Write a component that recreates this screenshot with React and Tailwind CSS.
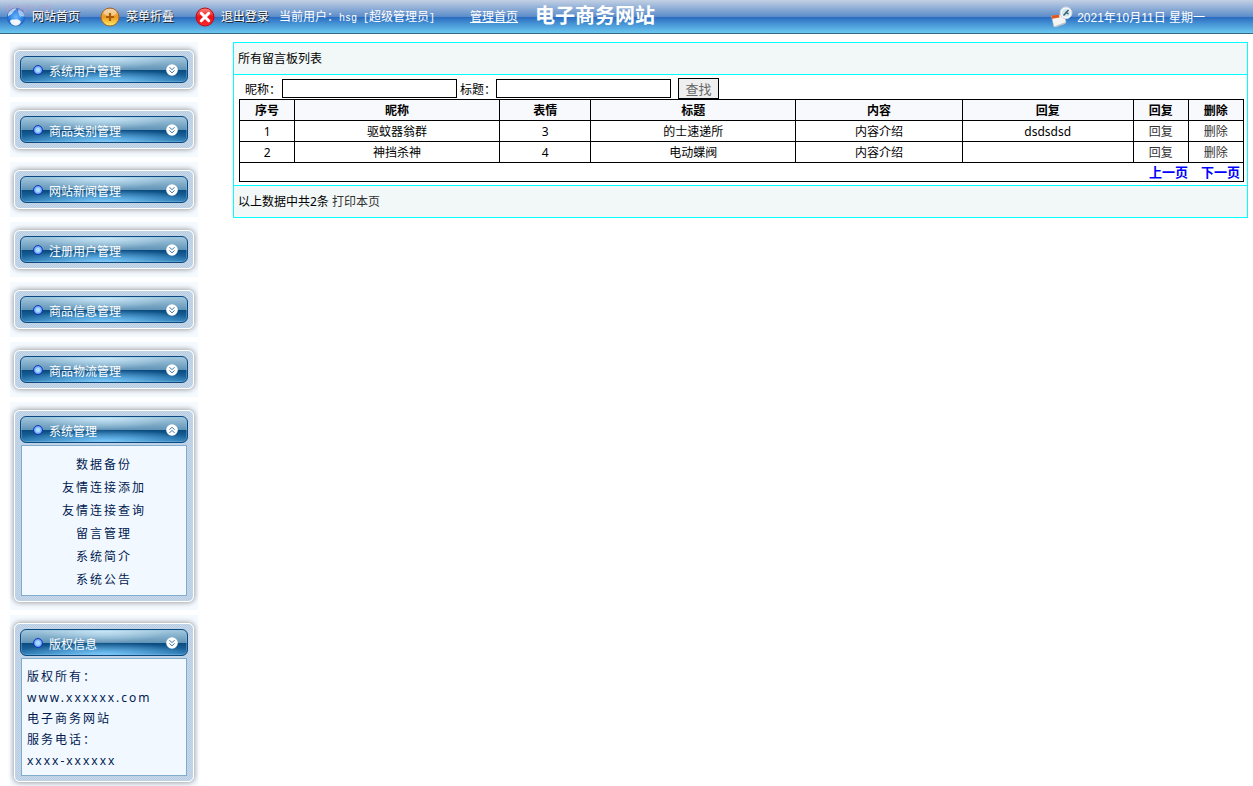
import { useState } from 'react';

const menus = [
  { title: '系统用户管理' },
  { title: '商品类别管理' },
  { title: '网站新闻管理' },
  { title: '注册用户管理' },
  { title: '商品信息管理' },
  { title: '商品物流管理' },
  {
    title: '系统管理',
    items: ['数据备份', '友情连接添加', '友情连接查询', '留言管理', '系统简介', '系统公告'],
  },
];

const messages = [
  { id: 1, name: '驱蚊器翁群', face: 3, title: '的士速递所', content: '内容介绍', reply: 'dsdsdsd' },
  { id: 2, name: '神挡杀神', face: 4, title: '电动蝶阀', content: '内容介绍', reply: '' },
];

const columns = [
  { label: '序号', width: 'w-[5.5%]' },
  { label: '昵称', width: 'w-[20.4%]' },
  { label: '表情', width: 'w-[9.1%]' },
  { label: '标题', width: 'w-[20.4%]' },
  { label: '内容', width: 'w-[16.6%]' },
  { label: '回复', width: 'w-[17%]' },
  { label: '回复', width: 'w-[5.5%]' },
  { label: '删除', width: 'w-[5.5%]' },
];

function GlobeIcon() {
  return (
    <svg viewBox="0 0 20 20" className="h-5 w-5" aria-hidden="true">
      <defs>
        <radialGradient id="globe" cx="50%" cy="50%" r="55%">
          <stop offset="0" stopColor="#6db8fb" />
          <stop offset="0.6" stopColor="#2f86e6" />
          <stop offset="1" stopColor="#1c55b4" />
        </radialGradient>
      </defs>
      <circle cx="10" cy="10" r="9.200" fill="url(#globe)" />
      <path d="M2 7C3.500 3 7 1.200 10.500 1.300C9.500 3.500 7 4 6.500 6C6 8 3.500 7.500 2 9.500Z" fill="#dcecfb" opacity="0.8" />
      <path d="M12.500 2C16 3 18.500 6 18.800 9.500C17 10 15.500 8.500 14.500 10C13 7.500 11.500 5.500 12.500 2Z" fill="#c4e0fa" opacity="0.75" />
      <path d="M4 14C6 11.500 8 13 9 12.500C11 11.500 14 13 15 15C13.500 17.800 12 18.700 9.500 18.800C6.500 18.500 4.500 16.500 4 14Z" fill="#fff" opacity="0.92" />
    </svg>
  );
}

function PlusIcon() {
  return (
    <svg viewBox="0 0 20 20" className="h-5 w-5" aria-hidden="true">
      <defs>
        <linearGradient id="amber" x1="0" y1="0" x2="0" y2="1">
          <stop offset="0" stopColor="#e9bd80" />
          <stop offset="0.5" stopColor="#ee9a1c" />
          <stop offset="1" stopColor="#ffee6a" />
        </linearGradient>
      </defs>
      <circle cx="10" cy="10" r="9" fill="url(#amber)" stroke="#a8632a" />
      <ellipse cx="10" cy="5.500" rx="6.500" ry="3.600" fill="#fff" opacity="0.4" />
      <path d="M10 6V14M6 10H14" stroke="#a85c0c" strokeWidth="2.200" />
    </svg>
  );
}

function CloseIcon() {
  return (
    <svg viewBox="0 0 20 20" className="h-5 w-5" aria-hidden="true">
      <defs>
        <linearGradient id="ruby" x1="0" y1="0" x2="0" y2="1">
          <stop offset="0" stopColor="#ff8a80" />
          <stop offset="0.5" stopColor="#e8101a" />
          <stop offset="1" stopColor="#ff2a2a" />
        </linearGradient>
      </defs>
      <circle cx="10" cy="10" r="9" fill="url(#ruby)" stroke="#c00810" />
      <path d="M6.300 6.300L13.700 13.700M13.700 6.300L6.300 13.700" stroke="#fff" strokeWidth="3" strokeLinecap="round" />
    </svg>
  );
}

function ClockIcon() {
  return (
    <svg viewBox="0 0 22 22" className="h-[22px] w-[22px]" aria-hidden="true">
      <path d="M0.500 10L13 8.500L15 16.500L3 21Z" fill="#f4f4f2" stroke="#c9ccd2" strokeWidth="0.500" />
      <path d="M0.500 9.500L8 8.800L8.500 11.500L1 12.800Z" fill="#e2571e" />
      <path d="M3 20.500L15 16L14 18L5 21.300Z" fill="#bfc6cf" />
      <circle cx="15" cy="6.800" r="5.900" fill="#f7fbfd" stroke="#cfd6dc" />
      <circle cx="15" cy="6.800" r="4" fill="#cfe8ee" />
      <path d="M12.500 9.500L17.500 4M14.500 6L17.500 8" stroke="#34566b" strokeWidth="1.300" />
    </svg>
  );
}

function Chevrons({ up }) {
  return (
    <svg viewBox="0 0 12 12" className="h-3 w-3" aria-hidden="true">
      <circle cx="6" cy="6" r="5.800" fill="#fff" />
      <path
        d={up ? 'M3.500 5.700L6 3.200L8.500 5.700M3.500 8.900L6 6.400L8.500 8.900' : 'M3.500 3.200L6 5.700L8.500 3.200M3.500 6.400L6 8.900L8.500 6.400'}
        fill="none"
        stroke="#3b6f9c"
      />
    </svg>
  );
}

function Panel({ title, up, onToggle, children }) {
  return (
    <section className="bg-[#f5faff] px-1 pt-2 pb-2">
      <div className="rounded-md border border-white bg-[repeating-conic-gradient(#b8cde2_0_25%,#c6d8e9_0_50%)] bg-[length:2px_2px] p-[5px] shadow-[0_0_5px_1px_#a0a4a8]">
        <button
          type="button"
          onClick={onToggle}
          className="flex h-[27px] w-full items-center rounded-md border border-[#0b4a80] bg-[radial-gradient(ellipse_40%_50%_at_50%_0%,#d5f1ffcc,transparent),radial-gradient(ellipse_55%_50%_at_50%_100%,#7cccff,transparent),linear-gradient(#a3c8de,#6496b8_50%,#0b4c80_54%,#2a7ab4)] pr-[9px] pl-3 text-xs leading-4 text-white shadow-[inset_0_0_0_1px_#8fc0dd66]"
        >
          <span className="h-[10px] w-[10px] rounded-full border border-[#1238c0] bg-[radial-gradient(#a5dcff_30%,#2f5cec)]" />
          <span className="ml-1.5 pt-1">{title}</span>
          <span className="ml-auto">
            <Chevrons up={up} />
          </span>
        </button>
        {children}
      </div>
    </section>
  );
}

function Sidebar() {
  const [open, setOpen] = useState('系统管理');
  return (
    <aside className="flex w-[188px] shrink-0 flex-col gap-[5px]">
      {menus.map(({ title, items }) => {
        const up = open === title && Boolean(items);
        return (
          <Panel key={title} title={title} up={up} onToggle={() => setOpen(open === title ? '' : title)}>
            {up && (
              <ul className="mx-px mt-0.5 border border-[#7faccf] bg-[#f2f8ff] pt-[7px] pb-1 text-center text-xs leading-[23px] tracking-[2px] text-[#001a50]">
                {items.map((item) => (
                  <li key={item}><a href="#">{item}</a></li>
                ))}
              </ul>
            )}
          </Panel>
        );
      })}
      <Panel title="版权信息">
        <div className="mx-px mt-0.5 border border-[#7faccf] bg-[#f2f8ff] px-[5px] pt-[7px] pb-1 text-xs leading-[21px] tracking-[2px] text-[#001a50]">
          <p>版权所有：</p>
          <p>www.xxxxxx.com</p>
          <p>电子商务网站</p>
          <p>服务电话：</p>
          <p>xxxx-xxxxxx</p>
        </div>
      </Panel>
    </aside>
  );
}

function Header() {
  return (
    <header className="relative flex h-[34px] items-center border-b border-[#356a86] bg-[linear-gradient(#c3d0e3,#5c8dca_50%,#2a6cc0_52%,#6bc8f0)] pl-1.5 text-xs leading-4 whitespace-nowrap text-white">
      <span className="pointer-events-none absolute top-0 left-[5px] font-['Liberation_Sans',sans-serif] text-[13px] leading-[15px] text-[#d98fb8]/40">wayu.cn</span>
      <a href="#" className="flex w-[94px] items-center gap-1.5 [text-shadow:1px_1px_#222]"><GlobeIcon />网站首页</a>
      <a href="#" className="flex w-[95px] items-center gap-1.5 [text-shadow:1px_1px_#222]"><PlusIcon />菜单折叠</a>
      <a href="#" className="flex w-[84px] items-center gap-1.5 [text-shadow:1px_1px_#222]"><CloseIcon />退出登录</a>
      <p className="w-[191px] pt-0.5">
        当前用户：<span className="font-['Liberation_Mono',monospace] text-[10px]">hsg [</span>超级管理员
        <span className="font-['Liberation_Mono',monospace] text-[10px]">]</span>
      </p>
      <a href="#" className="underline">管理首页</a>
      <h1 className="ml-[17px] pb-0.5 text-xl leading-6 font-bold">电子商务网站</h1>
      <div className="mr-12 ml-auto flex items-center gap-1 font-['Liberation_Sans','Noto_Sans_CJK_SC',sans-serif]">
        <ClockIcon />
        <time dateTime="2021-10-11" className="pt-0.5">2021年10月11日 星期一</time>
      </div>
    </header>
  );
}

function MessageTable() {
  return (
    <table className="w-full table-fixed border-collapse text-center [&_td]:border [&_td]:border-black [&_th]:border [&_th]:border-black">
      <thead>
        <tr className="h-[21px] bg-[#f8f9fc]">
          {columns.map(({ label, width }, i) => (
            <th key={i} className={`${width} pt-0.5`}>{label}</th>
          ))}
        </tr>
      </thead>
      <tbody>
        {messages.map((m) => (
          <tr key={m.id} className="h-[21px] *:pt-0.5">
            <td>{m.id}</td>
            <td>{m.name}</td>
            <td>{m.face}</td>
            <td>{m.title}</td>
            <td>{m.content}</td>
            <td>{m.reply}</td>
            <td><a href="#" className="text-[#333]">回复</a></td>
            <td><a href="#" className="text-[#333]">删除</a></td>
          </tr>
        ))}
        <tr className="h-[19px]">
          <td colSpan={8} className="pr-[3px] text-right text-[13px] font-bold text-[#0000ff]">
            <a href="#">上一页</a>
            <a href="#" className="ml-[13px]">下一页</a>
          </td>
        </tr>
      </tbody>
    </table>
  );
}

export default function App() {
  return (
    <div className="font-['Noto_Sans','Noto_Sans_CJK_SC',sans-serif]">
      <Header />
      <div className="flex items-start gap-[35px] pt-2 pr-[5px] pl-[10px]">
        <Sidebar />
        <main className="min-w-0 flex-1 border border-[#00ffff] text-xs leading-4 text-black">
          <h2 className="bg-[#f2f8f7] px-1 py-2 leading-[15px]">所有留言板列表</h2>
          <div className="border-y border-[#00ffff] pt-[3px] pr-[3px] pb-[3px] pl-[5px]">
            <form className="flex items-center pl-1.5" onSubmit={(e) => e.preventDefault()}>
              <label htmlFor="nickname" className="pt-0.5">昵称：</label>
              <input id="nickname" className="mr-[3px] ml-px h-[19px] w-[175px] border border-black px-1" />
              <label htmlFor="subject" className="pt-0.5">标题：</label>
              <input id="subject" className="h-[19px] w-[175px] border border-black px-1" />
              <button type="submit" className="ml-[7px] h-[21px] w-[41px] border border-black bg-[#efefef] text-[13px] text-[#666]">
                查找
              </button>
            </form>
            <MessageTable />
          </div>
          <footer className="bg-[#f2f8f7] px-1 py-2 leading-[15px]">
            以上数据中共2条 <a href="#" className="text-[#333]">打印本页</a>
          </footer>
        </main>
      </div>
    </div>
  );
}
